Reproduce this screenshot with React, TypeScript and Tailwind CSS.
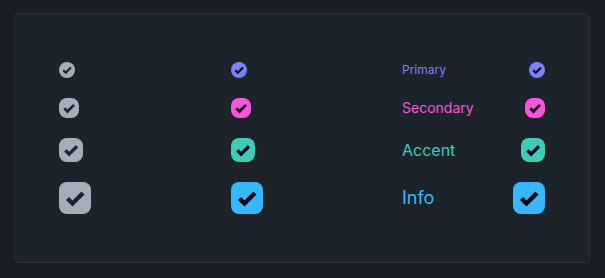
import React from "react";

type Size = "xs" | "sm" | "md" | "lg";

const sizeClass: Record<Size, string> = {
  xs: "w-4 h-4",
  sm: "w-5 h-5",
  md: "w-6 h-6",
  lg: "w-8 h-8",
};

const Check = ({ size, color, mark }: { size: Size; color: string; mark: string }) => (
  <div className={`${sizeClass[size]} ${color} rounded-lg flex items-center justify-center shrink-0`}>
    <svg viewBox="0 0 32 32" className="w-full h-full">
      <path
        d="M8.5 16.5 L13.5 21.5 L24 11"
        fill="none"
        stroke={mark}
        strokeWidth="4.4"
        strokeLinecap="butt"
        strokeLinejoin="miter"
      />
    </svg>
  </div>
);

const rows: { size: Size; label: string; text: string; color: string; textSize: string }[] = [
  { size: "xs", label: "Primary", text: "text-[#7b80fb]", color: "bg-[#7b80fb]", textSize: "text-xs" },
  { size: "sm", label: "Secondary", text: "text-[#f755dc]", color: "bg-[#f755dc]", textSize: "text-sm" },
  { size: "md", label: "Accent", text: "text-[#3fcbb8]", color: "bg-[#3fcbb8]", textSize: "text-base" },
  { size: "lg", label: "Info", text: "text-[#3ab7fc]", color: "bg-[#3ab7fc]", textSize: "text-lg" },
];

export default function App() {
  return (
    <div
      className="w-[605px] h-[278px] bg-[#191e24] pt-[13px] pl-[14px] pr-[15px]"
      style={{ fontFamily: "Inter, 'Noto Sans', sans-serif" }}
    >
      <div className="h-[250px] bg-[#1d232a] border border-[#2a3038] rounded flex items-center justify-center">
        <div className="grid grid-cols-[143px_143px_143px] gap-x-[28.5px] gap-y-5 items-center">
          {rows.map((r) => (
            <React.Fragment key={r.label}>
              <div className="flex items-center">
                <Check size={r.size} color="bg-[#a6adbb]" mark="#1f252d" />
              </div>
              <div className="flex items-center">
                <Check size={r.size} color={r.color} mark="#0b0d16" />
              </div>
              <div className="flex items-center justify-between">
                <span className={`${r.textSize} leading-none ${r.text}`}>{r.label}</span>
                <Check size={r.size} color={r.color} mark="#0b0d16" />
              </div>
            </React.Fragment>
          ))}
        </div>
      </div>
    </div>
  );
}
